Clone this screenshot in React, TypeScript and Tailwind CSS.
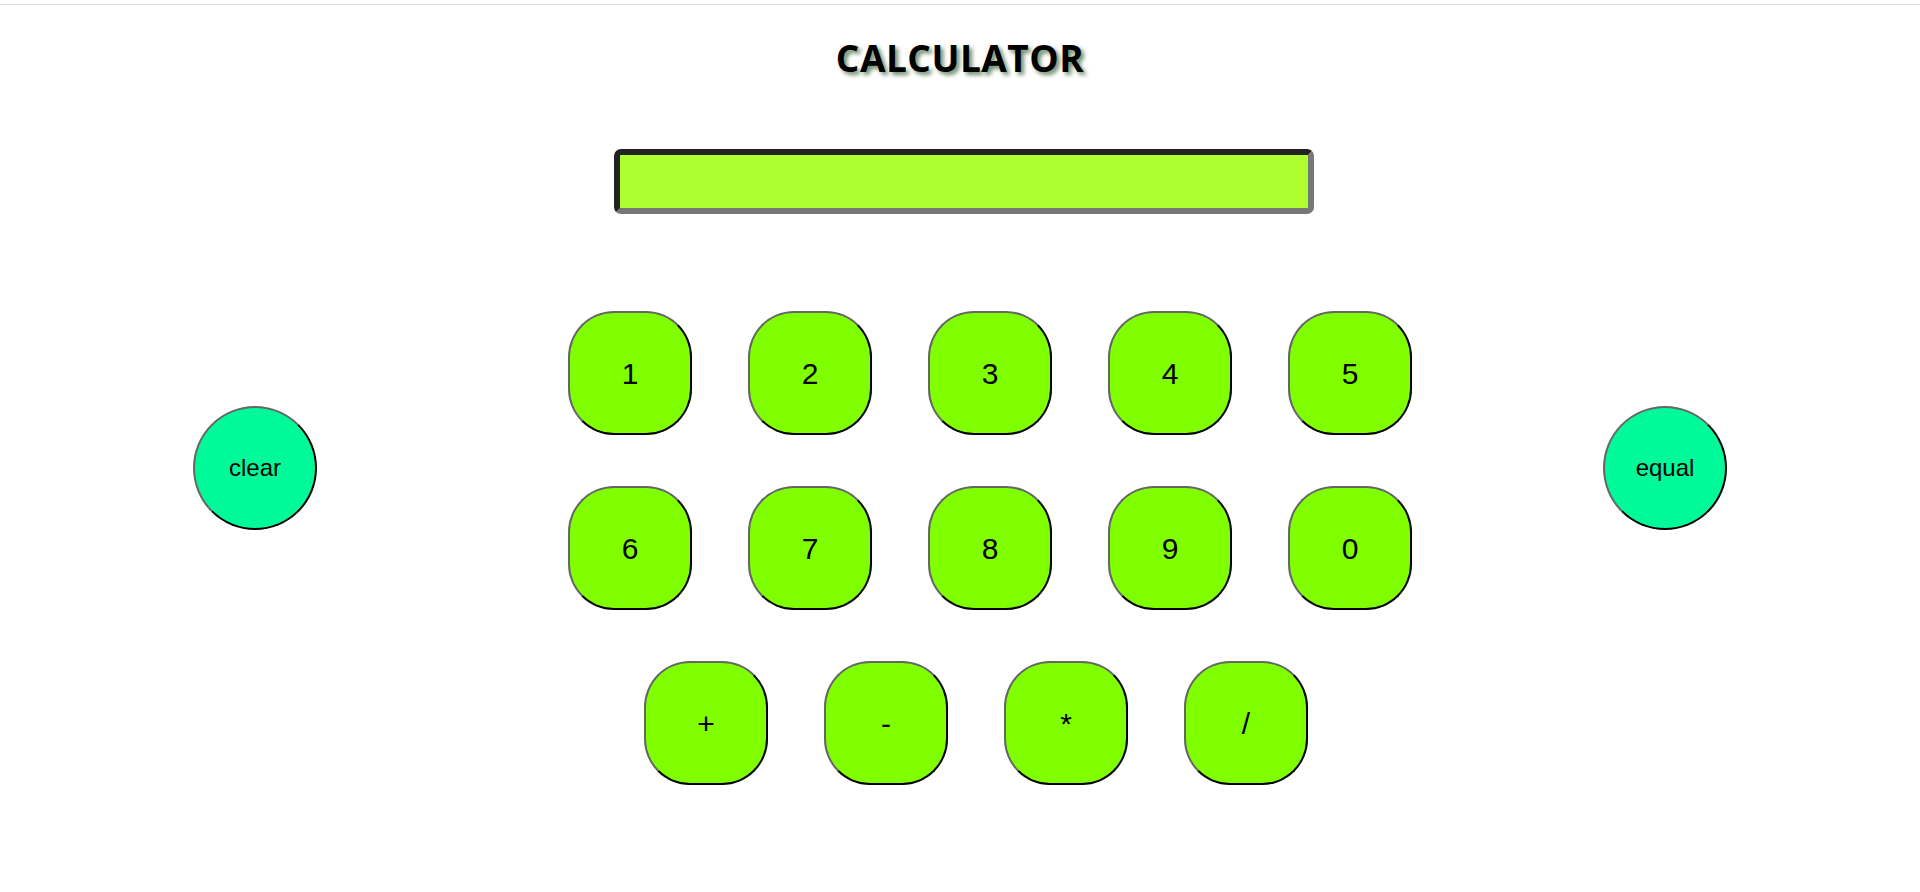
import React from 'react';

const ROWS = [
  ['1', '2', '3', '4', '5'],
  ['6', '7', '8', '9', '0'],
];
const OPS = ['+', '-', '*', '/'];

function Key({ label }: { label: string }) {
  return (
    <button className="w-[124px] h-[124px] rounded-[46px] bg-[#7fff00] border-2 border-t-[#666] border-l-[#666] border-b-black border-r-black text-[30px] text-black flex items-center justify-center font-['Liberation_Sans',Arial,sans-serif]">
      {label}
    </button>
  );
}

function Round({ label }: { label: string }) {
  return (
    <button className="w-[124px] h-[124px] rounded-full bg-[#00fa9a] border-2 border-t-[#666] border-l-[#666] border-b-black border-r-black text-[24px] text-black flex items-center justify-center font-['Liberation_Sans',Arial,sans-serif]">
      {label}
    </button>
  );
}

export default function App() {
  return (
    <main className="min-h-screen w-full bg-white">
      <div className="pt-[4px]">
        <div className="h-[1px] bg-[#dcdcdc]" />
      </div>

      <h1 className="mt-[33px] text-center text-[37px] leading-[40px] tracking-[0.5px] font-bold text-black font-['Open_Sans','Noto_Sans',sans-serif] [text-shadow:3px_3px_4px_#6b8a6b]">
        CALCULATOR
      </h1>

      {/* display */}
      <div className="mt-[71px] flex justify-center pl-[8px]">
        <div className="w-[700px] h-[65px] rounded-[7px] bg-[#adff2f] border-[6px] border-t-[#222] border-l-[#222] border-b-[#777] border-r-[#777]" />
      </div>

      {/* keypad */}
      <div className="mt-[97px] flex items-start">
        <div className="ml-[193px] mt-[95px]">
          <Round label="clear" />
        </div>

        <div className="ml-[251px] flex flex-col gap-[51px]">
          {ROWS.map((row, i) => (
            <div key={i} className="flex gap-[56px]">
              {row.map((k) => (
                <Key key={k} label={k} />
              ))}
            </div>
          ))}
          <div className="ml-[76px] flex gap-[56px]">
            {OPS.map((k) => (
              <Key key={k} label={k} />
            ))}
          </div>
        </div>

        <div className="ml-[191px] mt-[95px]">
          <Round label="equal" />
        </div>
      </div>
    </main>
  );
}
